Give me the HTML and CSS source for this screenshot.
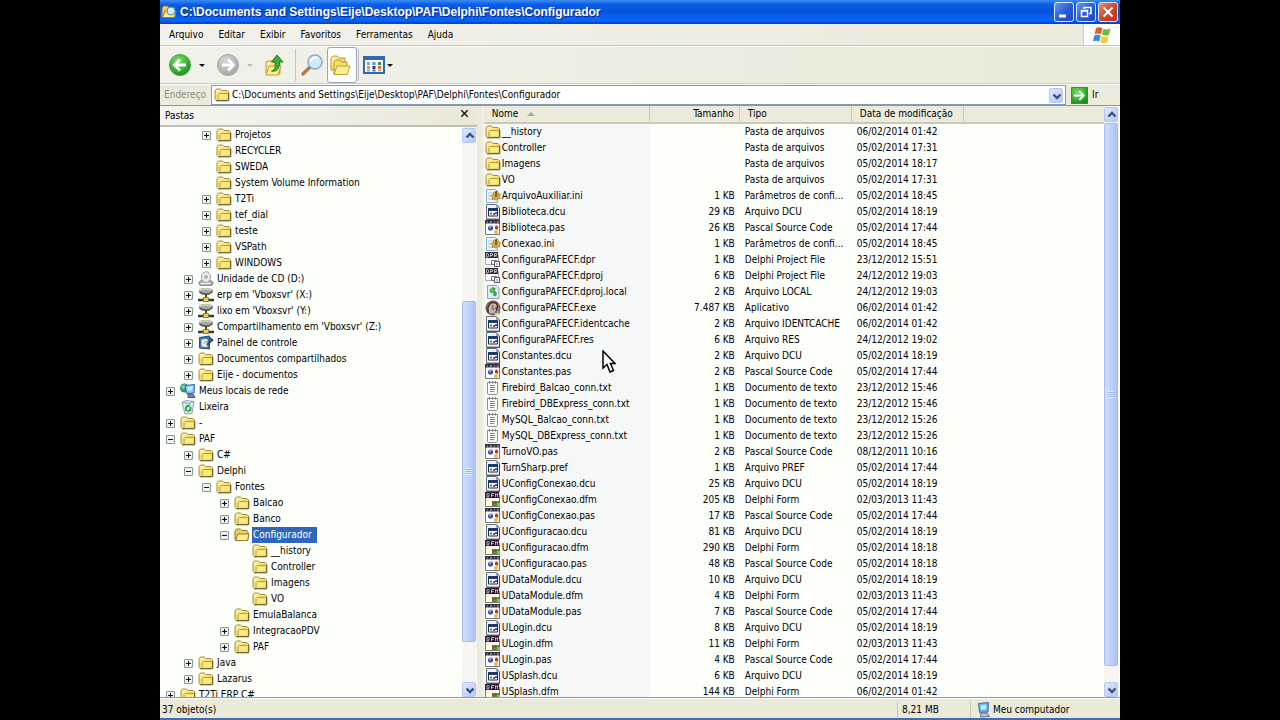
FILE: index.html
```html
<!DOCTYPE html>
<html lang="pt-BR">
<head>
<meta charset="utf-8">
<title>Configurador</title>
<link rel="stylesheet" href="styles.css">
</head>
<body>
<svg class="defs" aria-hidden="true">
  <defs>
    <linearGradient id="gold" x1="0" y1="0" x2="1" y2="1"><stop offset="0" stop-color="#fff9b4"/><stop offset=".6" stop-color="#f3dd66"/><stop offset="1" stop-color="#d9b33a"/></linearGradient>
    <radialGradient id="green" cx=".4" cy=".3" r=".8"><stop offset="0" stop-color="#7fe070"/><stop offset=".6" stop-color="#35b02c"/><stop offset="1" stop-color="#1b7f1a"/></radialGradient>
    <radialGradient id="gray" cx=".4" cy=".3" r=".8"><stop offset="0" stop-color="#d6d6d4"/><stop offset="1" stop-color="#a2a2a0"/></radialGradient>
    <symbol id="folder" viewBox="0 0 16 16"><path d="M1 12.500V4l1.500-2h4l1.500 1.500h5l1.500 1.500v7.500l-1 1H2z" fill="url(#gold)" stroke="#a58a38"/><path d="M4 12.500V7.500l1-1h8.500" fill="none" stroke="#b99a3c"/><path d="M5 7.500h8.500v5H5z" fill="#f9ea86"/><path d="M2 13.800h12.800V6" fill="none" stroke="#6e5a20"/></symbol>
    <symbol id="open" viewBox="0 0 16 16"><path d="M1 13V4l1.500-2h4l1.500 1.500h5l1 1.500V13z" fill="#ecd05a" stroke="#94782c"/><path d="M1.500 13.500 4 7h11l-1.500 6.500z" fill="#fff28a" stroke="#94782c"/></symbol>
    <symbol id="cd" viewBox="0 0 16 16"><path d="M1 11l3-2h8l3 2v2.500l-2 1H3l-2-1z" fill="#b5b5b5" stroke="#8a8a8a"/><ellipse cx="8" cy="6" rx="4.500" ry="5.300" fill="#ededed" stroke="#a5a5a5"/><circle cx="8" cy="6" r="1.300" fill="#fff" stroke="#888"/><path d="M3 12.500h9" stroke="#f3f3f3"/></symbol>
    <symbol id="net" viewBox="0 0 16 16"><path d="M1 3l3-2h7l4 1.500v2L11 7H5L1 5z" fill="#a5a5a2"/><path d="M2 3.500c3-2 8-2 11-.5" stroke="#e8e8e5" fill="none"/><path d="M1.500 5 5 7h6l3.500-2.500" fill="none" stroke="#4c4c4a" stroke-width="1.500"/><path d="M8 7v4" stroke="#444" stroke-width="2"/><path d="M0 13h5M11 13h5" stroke="#3c3c3a" stroke-width="2.500"/><path d="M5.500 10.500h5v4h-5z" fill="#f0ca44" stroke="#9a7c20"/></symbol>
    <symbol id="panel" viewBox="0 0 16 16"><path d="M1.500 2.500 11.500 1v13l-10-1z" fill="#3e78b8" stroke="#23507f"/><path d="M3.500 4.500 9.500 4v8l-6-.5z" fill="#e8f4fb"/><path d="M6 9l2-3 1 2" stroke="#c9a331" fill="none"/><path d="M9 10l5-5M12 3l3 3" stroke="#31455e" stroke-width="2"/></symbol>
    <symbol id="netplaces" viewBox="0 0 16 16"><circle cx="4.500" cy="5" r="4.500" fill="#2a9a54"/><path d="M1 3l4-2 1 3-3 3z" fill="#6fc6e8"/><path d="M5 2.500 14.500 1.500 14 10l-7.500.5z" fill="#8ccbf4" stroke="#3b64a4"/><path d="M7.500 4l5-.5-.5 4-4 .5z" fill="#c6ecff"/><path d="M8 11h5l2 3.500H8z" fill="#7a83c0" stroke="#46528c"/></symbol>
    <symbol id="bin" viewBox="0 0 16 16"><path d="M2 3.500 6 1.500l8 1-2 12-7 .5z" fill="#dcecf0" stroke="#8ba4b4"/><path d="M2 3.500l7 1 5-2" fill="none" stroke="#8ba4b4"/><path d="M5.500 9.500 7 7l3-.5M10.500 8v3l-3 1.500M5.500 9l1 3" fill="none" stroke="#27a042" stroke-width="1.800"/></symbol>
    <symbol id="pc" viewBox="0 0 16 16"><path d="M3.500 1.500 13.500.5 13 10l-8.500.5z" fill="#5fb0ea" stroke="#4971a5"/><path d="M5.500 3l6-.6-.4 5L6 8z" fill="#bfe9ff"/><path d="M6 11h6l2.500 3.500-9 .5z" fill="#bcc3d8" stroke="#65708f"/></symbol>
    <symbol id="ini" viewBox="0 0 16 16"><path d="M1.500 1.500h9l2 2v11h-11z" fill="#eef8fc" stroke="#8fb0c4"/><path d="M3 5h4M3 8h3M3 11h7" stroke="#8dc4dc"/><path d="M6 7.500l2-1 .5-2.500 2 .5L12.500 3l1 2.500 2 1-1 2 .5 2.500-2.500-.5-1.500 2-1.500-1.500-2.500.5.500-2.500z" fill="#d8ab39" stroke="#a07a28" stroke-width=".7"/><path d="M11 3v6" stroke="#5e4a24" stroke-width="1.500"/></symbol>
    <symbol id="dcu" viewBox="0 0 16 16"><path d="M1.500.5h10l3 3v12h-13z" fill="#eef1f4" stroke="#6b7076"/><path d="M11 .5v3.500h3.500z" fill="#9ba5b4"/><path d="M14.500 4v11.200H2" fill="none" stroke="#444"/><path d="M3.500 4.500h9v7.500h-9z" fill="#f7f8fb" stroke="#20304e"/><path d="M3 4h10v3H3z" fill="#1d3768"/><path d="M5 9.500h2" stroke="#1c9ba5" stroke-width="2"/><path d="M8 10h2" stroke="#c73a30" stroke-width="2"/><path d="M10 9h2" stroke="#305bb9" stroke-width="2"/></symbol>
    <symbol id="pas" viewBox="0 0 16 16"><path d="M.5.5h14v14H.5z" fill="#fdfdfd" stroke="#777"/><path d="M0 0h15v3.500H0z" fill="#33333a"/><path d="M2 2h1M5 2h2M9 2h1M12 2h2" stroke="#c9c9c9"/><circle cx="5.500" cy="8" r="2.600" fill="#4056ae"/><circle cx="5" cy="7" r="1" fill="#b9c6ff"/><path d="M11 5l2.500 2-1 3-3-1.500z" fill="#b13e2b"/><circle cx="11" cy="12" r="2" fill="#e5b93e"/></symbol>
    <symbol id="dfm" viewBox="0 0 16 16"><path d="M.5 3.500h14v11H.5z" fill="#fdfce2" stroke="#777"/><path d="M0 0h14v6H0z" fill="#2e1734"/><path d="M2 5V1.500h1.500l.5 1V4l-.5 1zM6.500 5V1.500H9M6.500 3.500h2M10.500 5V1.500l1 1.500 1-1.500V5" fill="none" stroke="#d8d0da" stroke-width=".8"/><path d="M7 9h8v5H7z" fill="#4a8f4d"/><path d="M7 9h4v3H7z" fill="#c14037"/><path d="M12 11h3v3h-3z" fill="#c3a42f"/></symbol>
    <symbol id="dpr" viewBox="0 0 16 16"><path d="M.5 3.500h13v9H.5z" fill="#fff" stroke="#aaa"/><path d="M0 0h13v6H0z" fill="#2e2735"/><path d="M1.500 5V1.500H3l.5 1V4L3 5zM5.500 5V1.500h2v2h-2M9.500 5V1.500h2v2h-1.500l1.500 1.500" fill="none" stroke="#ddd8e0" stroke-width=".8"/><path d="M6.500 8.500h5v4h-5z" fill="#fff" stroke="#777"/><path d="M9.500 9.500h5v5h-5z" fill="#fff" stroke="#555"/><path d="M12 11v2.500" stroke="#777"/></symbol>
    <symbol id="local" viewBox="0 0 16 16"><path d="M2.500 1.500h9l2.500 2.500v10.500H2.500z" fill="#dcecf7" stroke="#8aa0b7"/><path d="M4.500 6l3-3 3 1-.5 3 2 2-1 3.500-3-1 .5-3-3 .500z" fill="#43a447"/><path d="M6 5.500l2 1" stroke="#d6ef8f"/></symbol>
    <symbol id="exe" viewBox="0 0 16 16"><circle cx="8" cy="8" r="7" fill="#a08d70" stroke="#4a4642"/><path d="M3.500 13C1.500 7 4.500 2.500 8 2.500c5 0 5.500 5 3 6l2 4" fill="#b7c0c8" stroke="#5b2920" stroke-width="1.500"/><path d="M6.500 5h2.500v5.500H6.500z" fill="#ca7130"/><path d="M10 11h5v4h-5z" fill="#eed34a"/><path d="M10 11h2v2h-2z" fill="#3868ad"/><path d="M13 11h2v2h-2z" fill="#47943e"/></symbol>
    <symbol id="txt" viewBox="0 0 16 16"><path d="M2.500 2.500h10v11l-1 1h-8l-1-1z" fill="#fcfcf6" stroke="#8a8e8f"/><path d="M4.500 1v2.500M7.500 1v2.500M10.500 1v2.500" stroke="#73787b"/><path d="M5 5.500h5M5 7.500h5M5 9.500h5M5 11.500h4" stroke="#888"/></symbol>
    <symbol id="up" viewBox="0 0 14 14"><path d="M3.500 8.500 7 5l3.500 3.500" fill="none" stroke="#39527d" stroke-width="2.400"/></symbol>
    <symbol id="down" viewBox="0 0 14 14"><path d="M3.500 5.500 7 9l3.500-3.500" fill="none" stroke="#39527d" stroke-width="2.400"/></symbol>
  </defs>
</svg>
<main class="window">
  <header class="titlebar">
    <svg class="icon"><use href="#open"/><circle cx="10" cy="7" r="4" fill="#ccecff" stroke="#5888a6"/></svg>
    <h1 class="title">C:\Documents and Settings\Eije\Desktop\PAF\Delphi\Fontes\Configurador</h1>
    <div class="caption-buttons">
      <button class="caption" aria-label="Minimizar"><svg viewBox="0 0 18 18"><path d="M4 13h7" stroke="#fff" stroke-width="3"/></svg></button>
      <button class="caption" aria-label="Restaurar"><svg viewBox="0 0 18 18"><path d="M7 6V4.500h7v6h-2M4.500 7.500h6v6h-6zM4 8h7M7 4.500h7" fill="none" stroke="#fff" stroke-width="1.500"/></svg></button>
      <button class="caption close" aria-label="Fechar"><svg viewBox="0 0 18 18"><path d="M4.500 4.500l9 9M13.500 4.500l-9 9" stroke="#fff" stroke-width="2.200"/></svg></button>
    </div>
  </header>
  <nav class="menubar">
    <div class="menus"><button>Arquivo</button><button>Editar</button><button>Exibir</button><button>Favoritos</button><button>Ferramentas</button><button>Ajuda</button></div>
    <div class="flag"><svg viewBox="0 0 20 18"><path d="M4 2c3-1.500 5-.5 6.500.3L9 8.500c-2-1.200-4-1.300-6.300-.3z" fill="#e8592e"/><path d="M11.500 2.800c2 1 4.500 1 7-.3L17 8.700c-2.500 1.200-5 1-7 0z" fill="#6dbb3c"/><path d="M2.400 9.300c2.400-1 4.300-.8 6.300.3L7.200 15.700c-2-1.300-4-1.300-6.300-.3z" fill="#4488ce"/><path d="M9.700 9.900c2 1.100 4.500 1.200 7 0l-1.500 6.300c-2.400 1.200-5 1-7 0z" fill="#f6cb36"/></svg></div>
  </nav>
  <div class="toolbar">
    <button class="tool split" aria-label="Voltar"><svg class="big" viewBox="0 0 24 24"><circle cx="12" cy="12" r="10.500" fill="url(#green)" stroke="#4a9a48"/><path d="M18 12H7M12 6.500 6.500 12l5.500 5.500" fill="none" stroke="#fff" stroke-width="2.800"/></svg><i class="arrow"></i></button>
    <button class="tool split disabled" aria-label="Avançar"><svg class="big" viewBox="0 0 24 24"><circle cx="12" cy="12" r="10.500" fill="url(#gray)" stroke="#a5a5a2"/><path d="M6 12h11M12 6.500l5.500 5.500-5.500 5.500" fill="none" stroke="#fff" stroke-width="2.800"/></svg><i class="arrow"></i></button>
    <button class="tool up" aria-label="Acima"><svg class="big" viewBox="0 0 24 24"><path d="M2 20V9l2-1h4l1 1.500h7v11l-2 1z" fill="url(#gold)" stroke="#bd9330"/><path d="M2 22l3-9h12l-3 9z" fill="#ffef8d" stroke="#c19b33"/><path d="M7.500 18c4-1 4-4 3.500-9H7.500L13 2l6 7h-3.500c0 6-2 10-8 9z" fill="#3fae37" stroke="#247b22"/></svg></button>
    <span class="sep"></span>
    <button class="tool" aria-label="Pesquisar"><svg class="big" viewBox="0 0 24 24"><path d="M9.500 14.500 3 21" stroke="#b07a5c" stroke-width="3.500" stroke-linecap="round"/><circle cx="15" cy="9" r="7" fill="#cfeafb" stroke="#8fa9c8" stroke-width="1.500"/><path d="M10.500 8c1-3 4-4 7-3" fill="none" stroke="#fff" stroke-width="2"/></svg></button>
    <button class="tool pressed" aria-label="Pastas"><svg class="big" viewBox="0 0 24 24"><path d="M1 17V5l2-2h4l2 2h6v12z" fill="url(#gold)" stroke="#c09a36"/><path d="M4 21V9l2-2h4l2 2h5v4" fill="#f7dd6d" stroke="#bd9330"/><path d="M4 21.500 7 13h13l-3 8.500z" fill="#fff08e" stroke="#c09a36"/></svg></button>
    <span class="sep"></span>
    <button class="tool split views" aria-label="Modos de exibição"><svg class="grid" viewBox="0 0 22 18"><path d="M1 1h20v16H1z" fill="#fff" stroke="#2f69b4" stroke-width="2"/><path d="M1 2.500h20" stroke="#2f69b4" stroke-width="3"/><g stroke-width="3"><path d="M4 7.500h3" stroke="#8ba6c9"/><path d="M9.500 7.500h3" stroke="#6787d8"/><path d="M15 7.500h3" stroke="#2c8e50"/><path d="M4 11.500h3" stroke="#c59789"/><path d="M9.500 11.500h3" stroke="#22386c"/><path d="M15 11.500h3" stroke="#dc6547"/></g><g stroke-width="2"><path d="M4 14.500h3" stroke="#9ba3ad"/><path d="M9.500 14.500h3" stroke="#4c67a7"/><path d="M15 14.500h3" stroke="#d2a847"/></g></svg><i class="arrow"></i></button>
  </div>
  <form class="address">
    <label for="path">Endereço</label>
    <div class="combo"><svg class="icon"><use href="#folder"/></svg><input id="path" value="C:\Documents and Settings\Eije\Desktop\PAF\Delphi\Fontes\Configurador"><button type="button" class="knob" aria-label="Abrir lista"><svg><use href="#down"/></svg></button></div>
    <button type="button" class="go"><svg viewBox="0 0 18 18"><path d="M.5.5h17v17H.5z" fill="url(#green)" stroke="#2c8a35"/><path d="M3 9h10M9 4.500 13.500 9 9 13.500" fill="none" stroke="#fff" stroke-width="2"/></svg><span>Ir</span></button>
  </form>
  <div class="content">
    <aside class="folders">
      <div class="pane-head"><h2>Pastas</h2><button aria-label="Fechar painel"><svg viewBox="0 0 10 10"><path d="M1.500 1.500l7 7M8.500 1.500l-7 7" stroke="#111" stroke-width="1.500"/></svg></button></div>
      <div class="pane-body">
        <ul class="tree" id="tree"></ul>
        <div class="scrollbar tree-scroll"><button class="knob" aria-label="Subir"><svg><use href="#up"/></svg></button><div class="track"><div class="thumb"><i class="grip"></i></div></div><button class="knob" aria-label="Descer"><svg><use href="#down"/></svg></button></div>
      </div>
    </aside>
    <section class="files">
      <div class="list">
        <table>
          <colgroup><col class="c-name"><col class="c-size"><col class="c-type"><col class="c-date"><col></colgroup>
          <thead><tr><th>Nome<i class="sort"></i></th><th class="size">Tamanho</th><th>Tipo</th><th>Data de modificação</th><th></th></tr></thead>
          <tbody id="rows"></tbody>
        </table>
      </div>
      <div class="scrollbar list-scroll"><button class="knob" aria-label="Subir"><svg><use href="#up"/></svg></button><div class="track"><div class="thumb"><i class="grip"></i></div></div><button class="knob" aria-label="Descer"><svg><use href="#down"/></svg></button></div>
    </section>
  </div>
  <footer class="status"><span class="count">37 objeto(s)</span><span class="total">8,21 MB</span><span class="zone"><svg class="icon"><use href="#pc"/></svg>Meu computador</span></footer>
  <svg class="pointer" viewBox="0 0 14 24"><path d="M1 1v17l4-3.500L8 22l3.500-1.500L8.500 13.500H13z" fill="#fff" stroke="#000" stroke-width="1.500"/></svg>
</main>
<script src="app.js"></script>
</body>
</html>
```

FILE: styles.css
```css
* { box-sizing: border-box; }
body { margin: 0; background: #000; color: #000; font: 10px/16px "DejaVu Sans Condensed", "DejaVu Sans", Tahoma, sans-serif; }
button { margin: 0; padding: 0; border: 0; background: none; color: inherit; font: inherit; }
h1, h2 { margin: 0; font-weight: normal; font-size: 10px; }
svg { display: block; }
.defs { position: absolute; width: 0; height: 0; }
.icon { flex: none; width: 16px; height: 16px; }
.window { position: relative; display: flex; flex-direction: column; width: 75%; height: 100vh; margin: 0 auto; overflow: hidden; background: #eceadb; border-bottom: 2px solid #3f6db5; }

.titlebar { flex: none; display: flex; align-items: center; gap: 3px; height: 24px; padding: 0 2px 0 1px; background: linear-gradient(#3a8df5, #0a5be4 20%, #0553dc 50%, #0a66fa 85%, #0440b8); }
.title { flex: 1; color: #fff; font: bold 12px/20px "Liberation Sans", Arial, sans-serif; white-space: nowrap; text-shadow: 1px 1px #0a2c86; }
.caption-buttons { display: flex; gap: 2px; }
.caption { width: 20px; height: 20px; border: 1px solid #dce8fb; border-radius: 3px; background: linear-gradient(135deg, #6c98f0, #2c5cd8 50%, #1c48c4); }
.caption.close { background: linear-gradient(135deg, #e8907a, #d0462c 50%, #b8341c); }

.menubar { flex: none; display: flex; height: 22px; border-bottom: 1px solid #c9c7b8; }
.menus { flex: 1; display: flex; align-items: center; gap: 15px; padding-left: 9px; background: linear-gradient(90deg, #f2f1ec, #eceadb); }
.flag { display: grid; place-items: center; width: 37px; background: #fff; border-left: 1px solid #c9c7b8; }
.flag svg { width: 20px; height: 18px; }

.toolbar { flex: none; display: flex; align-items: center; height: 38px; padding-left: 8px; border-top: 1px solid #fff; border-bottom: 1px solid #cfcdbe; background: linear-gradient(90deg, #f1f1ea, #eaead8); }
.tool { display: flex; align-items: center; justify-content: center; width: 30px; height: 36px; }
.big { width: 24px; height: 24px; }
.grid { width: 22px; height: 18px; }
.split { width: 48px; justify-content: flex-start; gap: 7px; }
.up { width: 24px; margin-right: 6px; }
.arrow { border: 3px solid transparent; border-top-color: #111; border-bottom: 0; }
.disabled .arrow { border-top-color: #bbb; }
.sep { width: 1px; height: 32px; margin: 0 1px; background: #c5c5b8; }
.pressed { border: 1px solid #98a5bb; border-radius: 3px; background: #fff; }
.views { padding-left: 3px; gap: 2px; }

.address { flex: none; display: flex; align-items: center; height: 21px; border-top: 1px solid #fff; }
.address label { width: 51px; padding-left: 4px; color: #8d8c80; }
.combo { flex: 1; display: flex; align-items: center; gap: 2px; height: 20px; padding: 0 2px; border: 1px solid #7f9db9; background: #fff; }
.combo input { flex: 1; min-width: 0; height: 16px; padding: 0; border: 0; background: none; color: inherit; font: inherit; }
.knob { flex: none; display: grid; place-items: center; width: 14px; height: 15px; border: 1px solid #b4c8f4; border-radius: 2px; background: linear-gradient(135deg, #dde8fe, #b4c8f6); }
.knob svg { width: 14px; height: 14px; }
.go { display: flex; align-items: center; gap: 4px; width: 54px; padding-left: 5px; }
.go svg { width: 17px; height: 17px; }

.content { flex: 1; min-height: 0; display: flex; gap: 5px; border-top: 1px solid #8a96a0; border-bottom: 1px solid #9a998c; }
.folders { flex: none; display: flex; flex-direction: column; width: 33%; }
.pane-head { flex: none; display: flex; align-items: center; justify-content: space-between; height: 21px; padding: 0 8px 0 5px; border-bottom: 2px solid #c0bfb4; background: linear-gradient(90deg, #f4f4f0, #eae9d8); }
.pane-head svg { width: 9px; height: 9px; margin-bottom: 5px; }
.pane-body { flex: 1; min-height: 0; display: flex; background: #fdfffb; }
.tree { flex: 1; overflow: hidden; margin: 0; padding: 0; list-style: none; }
.node { display: flex; align-items: center; gap: 2px; height: 16px; padding-left: 6px; white-space: nowrap; }
.indent { flex: none; width: 18px; margin-right: -2px; }
.expander { flex: none; display: grid; place-items: center; width: 9px; height: 9px; margin-right: 3px; border: 1px solid #8494a0; border-radius: 1px; background: #f2f2ec; }
.expander svg { width: 7px; height: 7px; }
.blank { visibility: hidden; }
.label { padding: 0 5px 0 1px; }
.selected .label { background: #2f66bd; color: #fff; }

.scrollbar { flex: none; display: flex; flex-direction: column; gap: 1px; width: 15px; padding: 1px 1px 0 0; background: #f5f5f1; }
.track { flex: 1; display: flex; flex-direction: column; }
.thumb { flex: 1; display: grid; place-items: center; width: 14px; border: 1px solid #a5bbee; border-radius: 2px; background: linear-gradient(90deg, #d0defc, #bccffa 60%, #acc2f4); }
.grip { width: 6px; height: 7px; background: repeating-linear-gradient(#e6eefe 0 1px, #9cb4ea 1px 2px); }
.tree-scroll .track { padding-top: 157px; padding-bottom: 39px; }
.list-scroll .track { padding-bottom: 15px; }

.files { flex: 1; min-width: 0; display: flex; padding-right: 1px; background: linear-gradient(90deg, #f1f0e6 2px, #fdfffb 2px); }
.list { flex: 1; min-width: 0; overflow: hidden; padding-left: 2px; }
table { width: 100%; table-layout: fixed; border-collapse: separate; border-spacing: 0; }
.c-name { width: 166px; }
.c-size { width: 90px; }
.c-type, .c-date { width: 112px; }
th, td { height: 16px; padding: 0 5px; font-weight: normal; text-align: left; white-space: nowrap; }
th { height: 18px; padding: 0 8px; background: #ecebdb; border-bottom: 2px solid #cbc8b8; border-right: 1px solid #cbc8b8; }
th:last-child { border-right: 0; }
.size { text-align: right; }
th.size { padding-right: 5px; }
.sort { display: inline-block; margin-left: 9px; vertical-align: 1px; border: 4px solid transparent; border-top: 0; border-bottom-color: #aca899; }
td:first-child { padding: 0 0 0 1px; background: #f6f8f7; }
.file { display: flex; align-items: center; gap: 1px; height: 16px; }

.status { flex: none; display: flex; align-items: center; height: 20px; padding-top: 2px; background: #ebead9; border-top: 1px solid #fff; }
.count { flex: 1; padding-left: 2px; }
.total { width: 73px; padding-left: 4px; border-left: 1px solid #c9c7b8; }
.zone { display: flex; align-items: center; gap: 2px; width: 150px; padding-left: 4px; border-left: 1px solid #c9c7b8; }
.pointer { position: absolute; left: 442px; top: 350px; width: 14px; height: 24px; }
```

FILE: app.js
```js
// depth | expander (+, -, none) | icon | label
const tree = `2|+|folder|Projetos
2||folder|RECYCLER
2||folder|SWEDA
2||folder|System Volume Information
2|+|folder|T2Ti
2|+|folder|tef_dial
2|+|folder|teste
2|+|folder|VSPath
2|+|folder|WINDOWS
1|+|cd|Unidade de CD (D:)
1|+|net|erp em 'Vboxsvr' (X:)
1|+|net|lixo em 'Vboxsvr' (Y:)
1|+|net|Compartilhamento em 'Vboxsvr' (Z:)
1|+|panel|Painel de controle
1|+|folder|Documentos compartilhados
1|+|folder|Eije - documentos
0|+|netplaces|Meus locais de rede
0||bin|Lixeira
0|+|folder|-
0|-|folder|PAF
1|+|folder|C#
1|-|folder|Delphi
2|-|folder|Fontes
3|+|folder|Balcao
3|+|folder|Banco
3|-|open|Configurador
4||folder|__history
4||folder|Controller
4||folder|Imagens
4||folder|VO
3||folder|EmulaBalanca
3|+|folder|IntegracaoPDV
3|+|folder|PAF
1|+|folder|Java
1|+|folder|Lazarus
0|+|folder|T2Ti ERP C#`;

const types = {
  folder: 'Pasta de arquivos', ini: 'Parâmetros de confi...', dcu: 'Arquivo DCU',
  pas: 'Pascal Source Code', dfm: 'Delphi Form', dpr: 'Delphi Project File',
  local: 'Arquivo LOCAL', exe: 'Aplicativo', txt: 'Documento de texto'
};

// icon | name | size in KB | modified | type when it differs from the icon's
const files = `folder|__history||06/02/2014 01:42
folder|Controller||05/02/2014 17:31
folder|Imagens||05/02/2014 18:17
folder|VO||05/02/2014 17:31
ini|ArquivoAuxiliar.ini|1|05/02/2014 18:45
dcu|Biblioteca.dcu|29|05/02/2014 18:19
pas|Biblioteca.pas|26|05/02/2014 17:44
ini|Conexao.ini|1|05/02/2014 18:45
dpr|ConfiguraPAFECF.dpr|1|23/12/2012 15:51
dpr|ConfiguraPAFECF.dproj|6|24/12/2012 19:03
local|ConfiguraPAFECF.dproj.local|2|24/12/2012 19:03
exe|ConfiguraPAFECF.exe|7.487|06/02/2014 01:42
dcu|ConfiguraPAFECF.identcache|2|06/02/2014 01:42|Arquivo IDENTCACHE
dcu|ConfiguraPAFECF.res|6|24/12/2012 19:02|Arquivo RES
dcu|Constantes.dcu|2|05/02/2014 18:19
pas|Constantes.pas|2|05/02/2014 17:44
txt|Firebird_Balcao_conn.txt|1|23/12/2012 15:46
txt|Firebird_DBExpress_conn.txt|1|23/12/2012 15:46
txt|MySQL_Balcao_conn.txt|1|23/12/2012 15:26
txt|MySQL_DBExpress_conn.txt|1|23/12/2012 15:26
pas|TurnoVO.pas|2|08/12/2011 10:16
dcu|TurnSharp.pref|1|05/02/2014 17:44|Arquivo PREF
dcu|UConfigConexao.dcu|25|05/02/2014 18:19
dfm|UConfigConexao.dfm|205|02/03/2013 11:43
pas|UConfigConexao.pas|17|05/02/2014 17:44
dcu|UConfiguracao.dcu|81|05/02/2014 18:19
dfm|UConfiguracao.dfm|290|05/02/2014 18:18
pas|UConfiguracao.pas|48|05/02/2014 18:18
dcu|UDataModule.dcu|10|05/02/2014 18:19
dfm|UDataModule.dfm|4|02/03/2013 11:43
pas|UDataModule.pas|7|05/02/2014 17:44
dcu|ULogin.dcu|8|05/02/2014 18:19
dfm|ULogin.dfm|11|02/03/2013 11:43
pas|ULogin.pas|4|05/02/2014 17:44
dcu|USplash.dcu|6|05/02/2014 18:19
dfm|USplash.dfm|144|06/02/2014 01:42`;

const icon = id => `<svg class="icon"><use href="#${id}"/></svg>`;

document.getElementById('tree').innerHTML = tree.split('\n').map(line => {
  const [depth, mark, kind, label] = line.split('|');
  const path = mark === '+' ? 'M1 3.5h5M3.5 1v5' : 'M1 3.5h5';
  return `<li class="node${kind === 'open' ? ' selected' : ''}">${'<i class="indent"></i>'.repeat(depth)}` +
    `<button class="expander${mark ? '' : ' blank'}" aria-label="${label}"><svg viewBox="0 0 7 7"><path d="${path}" stroke="#111"/></svg></button>` +
    `${icon(kind)}<span class="label">${label}</span></li>`;
}).join('');

document.getElementById('rows').innerHTML = files.split('\n').map(line => {
  const [kind, name, size, date, type] = line.split('|');
  return `<tr><td><span class="file">${icon(kind)}${name}</span></td><td class="size">${size ? size + ' KB' : ''}</td>` +
    `<td>${type || types[kind]}</td><td>${date}</td><td></td></tr>`;
}).join('');
```
